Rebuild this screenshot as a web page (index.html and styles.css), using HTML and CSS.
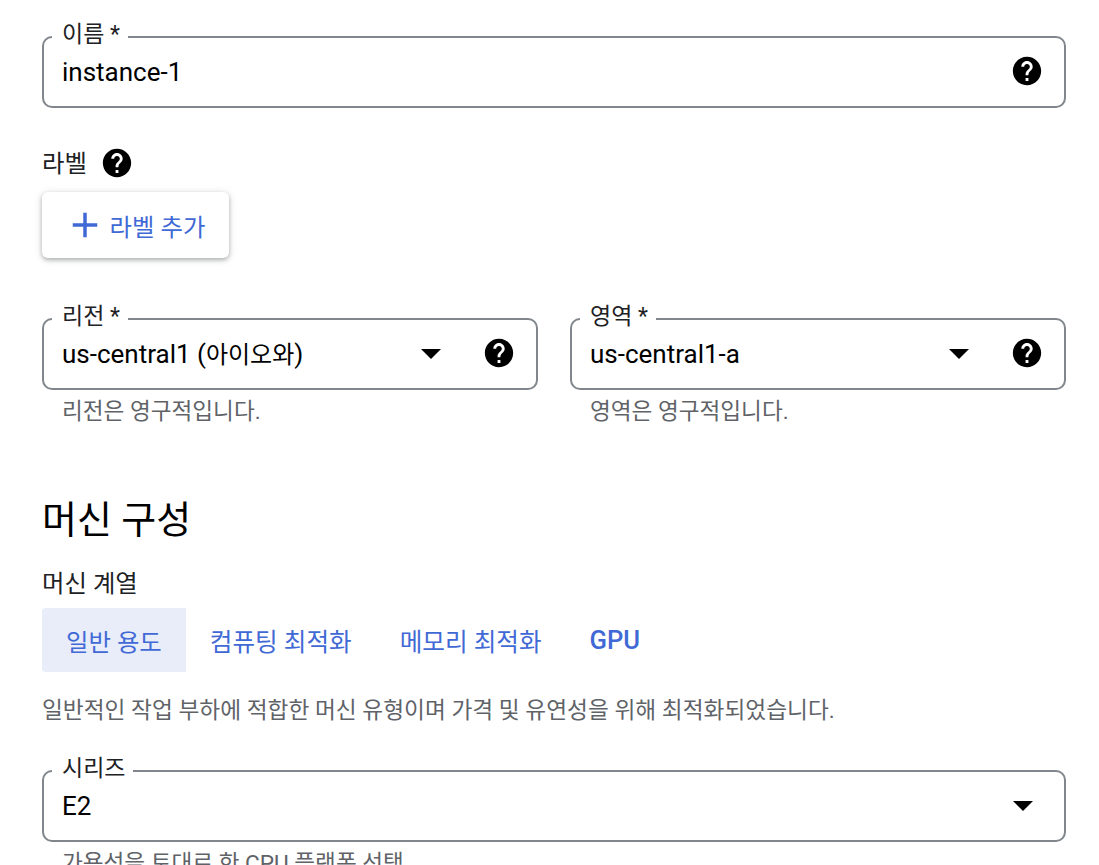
FILE: index.html
```html
<!DOCTYPE html>
<html lang="ko">
<head>
    <meta charset="UTF-8">
    <meta name="viewport" content="width=device-width, initial-scale=1.0">
    <title>인스턴스 만들기</title>
    <link rel="stylesheet" href="styles.css">
</head>
<body>
    <svg class="icon-defs" width="0" height="0">
        <symbol id="help" viewBox="0 0 24 24">
            <path d="M12 2C6.48 2 2 6.48 2 12s4.48 10 10 10 10-4.48 10-10S17.52 2 12 2zm1 17h-2v-2h2v2zm2.07-7.75l-.9.92C13.45 12.9 13 13.5 13 15h-2v-.5c0-1.1.45-2.1 1.17-2.83l1.24-1.26c.37-.36.59-.86.59-1.41 0-1.1-.9-2-2-2s-2 .9-2 2H8c0-2.21 1.79-4 4-4s4 1.79 4 4c0 .88-.36 1.68-.93 2.25z"/>
        </symbol>
    </svg>

    <div class="page">
        <div class="field">
            <span class="field-label">이름 *</span>
            <span class="field-value">instance-1</span>
            <svg class="help-icon"><use href="#help"/></svg>
        </div>

        <div class="label-title">
            <span class="label-text">라벨</span>
            <svg class="help-icon"><use href="#help"/></svg>
        </div>
        <button class="add-label">
            <svg class="plus-icon" viewBox="0 0 24 24"><path d="M19 13h-6v6h-2v-6H5v-2h6V5h2v6h6v2z"/></svg>
            <span>라벨 추가</span>
        </button>

        <div class="field-row">
            <div class="field-col">
                <div class="field">
                    <span class="field-label">리전 *</span>
                    <span class="field-value">us-central1 (<span class="value-ko">아이오와</span>)</span>
                    <span class="arrow"></span>
                    <svg class="help-icon"><use href="#help"/></svg>
                </div>
                <p class="hint">리전은 영구적입니다.</p>
            </div>
            <div class="field-col">
                <div class="field">
                    <span class="field-label">영역 *</span>
                    <span class="field-value">us-central1-a</span>
                    <span class="arrow"></span>
                    <svg class="help-icon"><use href="#help"/></svg>
                </div>
                <p class="hint">영역은 영구적입니다.</p>
            </div>
        </div>

        <h2 class="section-title">머신 구성</h2>
        <div class="sub-title">머신 계열</div>
        <div class="tabs">
            <div class="tab active">일반 용도</div>
            <div class="tab">컴퓨팅 최적화</div>
            <div class="tab">메모리 최적화</div>
            <div class="tab tab-gpu">GPU</div>
        </div>
        <p class="desc">일반적인 작업 부하에 적합한 머신 유형이며 가격 및 유연성을 위해 최적화되었습니다.</p>

        <div class="field">
            <span class="field-label">시리즈</span>
            <span class="field-value">E2</span>
            <span class="arrow arrow-end"></span>
        </div>
        <p class="hint">가용성을 토대로 한 CPU 플랫폼 선택</p>
    </div>
</body>
</html>
```

FILE: styles.css
```css
body {
    margin: 0;
    background: #fff;
    color: #000;
    font-family: Roboto, "Noto Sans CJK KR", sans-serif;
    height: 865px;
    overflow: hidden;
}
.icon-defs {
    display: block;
}
.page {
    padding: 36px 33px 0 42px;
}
.field {
    position: relative;
    box-sizing: border-box;
    height: 72px;
    border: 2px solid #80868b;
    border-radius: 10px;
    padding: 0 20px 0 18px;
    display: flex;
    align-items: center;
}
.field-label {
    position: absolute;
    top: -17px;
    left: 8px;
    padding: 0 8px 0 10px;
    background: #fff;
    font-size: 23px;
    line-height: 28px;
    color: #202124;
}
.field-value {
    flex: 1;
    font-size: 26px;
    line-height: 32px;
}
.value-ko {
    font-size: 24px;
}
.help-icon {
    width: 34px;
    height: 34px;
    fill: #000;
    flex: none;
}
.field .help-icon {
    margin-bottom: 2px;
}
.arrow {
    width: 0;
    height: 0;
    margin-right: 41px;
    border-left: 10px solid transparent;
    border-right: 10px solid transparent;
    border-top: 10px solid #000;
}
.arrow-end {
    margin-right: 11px;
}
.label-title {
    margin-top: 38px;
    display: flex;
    align-items: center;
    gap: 13px;
    font-size: 24.4px;
    height: 34px;
    color: #202124;
}
.label-text {
    padding-bottom: 4px;
}
.add-label {
    margin-top: 12px;
    box-sizing: border-box;
    width: 187px;
    height: 66px;
    border: none;
    border-radius: 6px;
    background: #fff;
    box-shadow: 0 2px 4px rgba(60, 64, 67, 0.35), 0 1px 8px rgba(60, 64, 67, 0.15);
    display: flex;
    align-items: center;
    justify-content: center;
    gap: 4px;
    padding: 0 2px 0 0;
    font-family: inherit;
    font-size: 24.4px;
    color: #4169d6;
}
.plus-icon {
    width: 42px;
    height: 42px;
    fill: #4169d6;
}
.field-row {
    margin-top: 60px;
    display: flex;
    gap: 32px;
}
.field-col {
    flex: 1;
}
.hint {
    margin: 8px 0 0 20px;
    font-size: 22.6px;
    line-height: 28px;
    color: #5f6368;
}
.section-title {
    margin: 68px 0 0;
    font-size: 38px;
    line-height: 52px;
    font-weight: 400;
}
.sub-title {
    margin-top: 23px;
    font-size: 24.4px;
    line-height: 30px;
    color: #202124;
}
.tabs {
    margin-top: 9px;
    display: flex;
}
.tab {
    height: 64px;
    padding: 0 24px;
    display: flex;
    align-items: center;
    font-size: 24.6px;
    color: #4169d6;
    border-radius: 4px 0 0 4px;
}
.tab.active {
    font-size: 24.4px;
    background: #e9edf9;
}
.tab-gpu {
    font-size: 25.6px;
    font-weight: 500;
}
.desc {
    margin: 25px 0 0;
    font-size: 22.7px;
    line-height: 28px;
    color: #5f6368;
}
.desc + .field {
    margin-top: 45px;
}
```
